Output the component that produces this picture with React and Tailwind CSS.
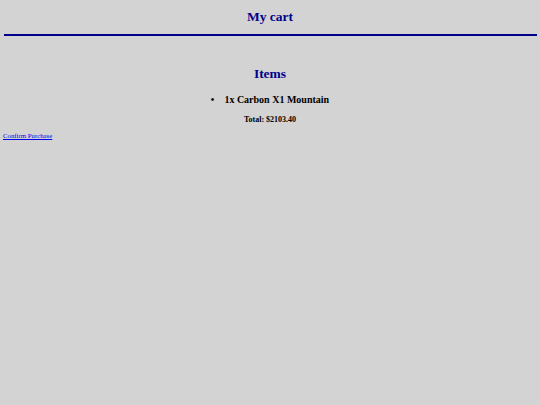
export default function App() {
  return (
    <div
      className="min-h-screen w-full bg-[#d3d3d3] text-black px-[3.5px]"
      style={{ fontFamily: '"Liberation Serif", "Times New Roman", serif' }}
    >
      <h1 className="pt-[8.5px] text-center text-[13.5px] leading-[16px] font-bold text-[#00008b]">
        My cart
      </h1>
      <div className="mt-[9px] h-[2.5px] w-full bg-[#00008b]" />
      <h2 className="mt-[29.5px] text-center text-[13.5px] leading-[16px] font-bold text-[#00008b]">
        Items
      </h2>
      <ul className="mt-[12.7px] flex justify-center text-[10px] leading-[12px] font-bold">
        <li className="flex items-baseline">
          <span className="mr-[10px]">•</span>
          <span>1x Carbon X1 Mountain</span>
        </li>
      </ul>
      <p className="mt-[9.2px] text-center text-[8px] leading-[10px] font-bold">
        Total: $2103.40
      </p>
      <div className="mt-[6.8px] -ml-[0.5px] text-[6.8px] leading-[8px]">
        <a href="#" className="text-[#0000ee] underline">
          Confirm Purchase
        </a>
      </div>
    </div>
  );
}
